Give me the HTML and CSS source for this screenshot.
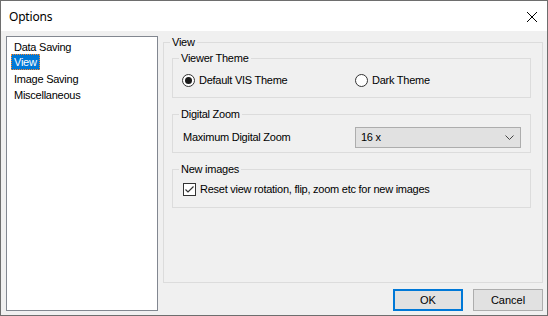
FILE: index.html
```html
<!DOCTYPE html>
<html lang="en">
<head>
    <meta charset="UTF-8">
    <title>Options</title>
    <link rel="stylesheet" href="styles.css">
</head>
<body>
    <div class="window">
        <div class="titlebar">
            <span class="title">Options</span>
            <svg class="close" width="12" height="12" viewBox="0 0 12 12">
                <path d="M1 1 L11 11 M11 1 L1 11" stroke="#000" stroke-width="1" fill="none"/>
            </svg>
        </div>
        <div class="body">
            <ul class="pages">
                <li><span>Data Saving</span></li>
                <li class="selected"><span>View</span></li>
                <li><span>Image Saving</span></li>
                <li><span>Miscellaneous</span></li>
            </ul>
            <div class="panel">
                <fieldset class="group outer">
                    <legend>View</legend>

                    <fieldset class="group">
                        <legend>Viewer Theme</legend>
                        <div class="row theme">
                            <label class="radio"><span class="circle checked"></span>Default VIS Theme</label>
                            <label class="radio"><span class="circle"></span>Dark Theme</label>
                        </div>
                    </fieldset>

                    <fieldset class="group">
                        <legend>Digital Zoom</legend>
                        <div class="row zoom">
                            <span class="label">Maximum Digital Zoom</span>
                            <div class="combo">
                                <span>16 x</span>
                                <svg width="9" height="5" viewBox="0 0 9 5">
                                    <path d="M0.5 0.5 L4.5 4.5 L8.5 0.5" stroke="#444" fill="none"/>
                                </svg>
                            </div>
                        </div>
                    </fieldset>

                    <fieldset class="group">
                        <legend>New images</legend>
                        <label class="check">
                            <span class="box">
                                <svg width="11" height="11" viewBox="0 0 11 11">
                                    <path d="M1.5 5.5 L4 8 L9.5 2.5" stroke="#333" stroke-width="1.2" fill="none"/>
                                </svg>
                            </span>
                            Reset view rotation, flip, zoom etc for new images
                        </label>
                    </fieldset>
                </fieldset>

                <div class="buttons">
                    <button class="btn default">OK</button>
                    <button class="btn">Cancel</button>
                </div>
            </div>
        </div>
    </div>
</body>
</html>
```

FILE: styles.css
```css
body { margin: 0; font-family: "Liberation Sans", Arial, sans-serif; font-size: 11px; line-height: 13px; letter-spacing: -0.25px; color: #000; }
.window { width: 548px; height: 316px; box-sizing: border-box; border: 1px solid #6e6e6e; display: flex; flex-direction: column; background: #f0f0f0; }

.titlebar { height: 30px; background: #fff; display: flex; align-items: center; justify-content: space-between; padding: 0 9px 0 8px; flex: none; }
.title { font-family: "Noto Sans", sans-serif; font-size: 12px; letter-spacing: -0.2px; }
.close { margin-top: 1px; }

.body { flex: 1; display: flex; gap: 5px; padding: 5px 4px 4px 5px; min-height: 0; }

.pages { list-style: none; margin: 0; padding: 1px 0 0 0; width: 152px; box-sizing: border-box; background: #fff; border: 1px solid #828790; }
.pages li { height: 16px; padding-left: 4px; }
.pages li span { display: inline-block; height: 16px; line-height: 16px; padding: 0 2px; box-sizing: border-box; border: 1px solid transparent; }
.pages li.selected span { background: #0078d7; color: #fff; border: 1px dotted #ff8728; line-height: 14px; }

.panel { flex: 1; display: flex; flex-direction: column; gap: 6px; }

.group { margin: 0; min-width: 0; border: 1px solid #dcdcdc; padding: 0 9px; }
.group legend { padding: 0 2px; margin-left: -3px; line-height: 13px; }
.group + .group { margin-top: 10px; }
.outer { flex: 1; padding: 3px 11px 0 8px; }
.outer > legend { margin-left: -2px; }

.row { display: grid; grid-template-columns: 173px 166px; align-items: center; }
.theme { padding: 9px 0 10px; }
.zoom { padding: 6px 0 4px; }
.label { margin-left: 1px; }

.radio { display: flex; align-items: center; }
.circle { width: 13px; height: 13px; box-sizing: border-box; border: 1px solid #333; border-radius: 50%; background: #fff; margin-right: 4px; display: flex; align-items: center; justify-content: center; }
.circle.checked::after { content: ""; width: 7px; height: 7px; border-radius: 50%; background: #1a1a1a; }

.combo { height: 21px; box-sizing: border-box; border: 1px solid #adadad; background: #e1e1e1; display: flex; align-items: center; justify-content: space-between; padding: 0 6px 0 5px; }

.check { display: flex; align-items: center; padding: 7px 0 11px 1px; }
.box { width: 13px; height: 13px; box-sizing: border-box; border: 1px solid #333; background: #fff; margin-right: 4px; display: flex; align-items: center; justify-content: center; }

.buttons { display: flex; justify-content: flex-end; gap: 10px; flex: none; }
.btn { width: 70px; height: 22px; font: inherit; color: #000; background: #e1e1e1; border: 1px solid #adadad; padding: 0; }
.btn.default { border: 2px solid #0078d7; }
```
